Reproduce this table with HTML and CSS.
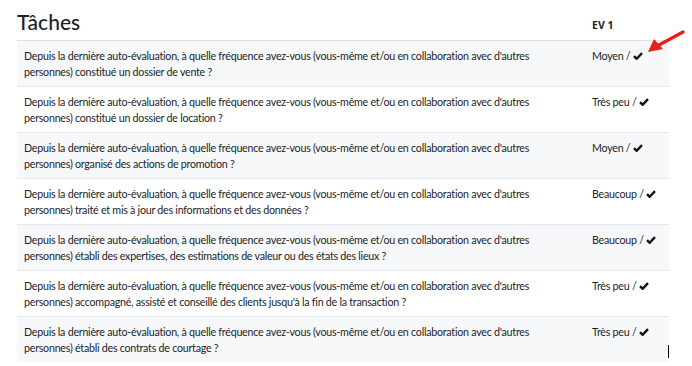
FILE: index.html
```html
<!DOCTYPE html>
<html lang="fr">
<head>
<meta charset="utf-8">
<title>Tâches</title>
<link rel="stylesheet" href="styles.css">
</head>
<body>
<div class="page">
  <table class="tasks">
    <colgroup>
      <col class="col-q">
      <col class="col-a">
    </colgroup>
    <thead>
      <tr>
        <th class="title">Tâches</th>
        <th class="ev">EV 1</th>
      </tr>
    </thead>
    <tbody>
      <tr>
        <td class="q">Depuis la dernière auto-évaluation, à quelle fréquence avez-vous (vous-même et/ou en collaboration avec d'autres personnes) constitué un dossier de vente ?</td>
        <td class="a">Moyen / <svg class="check" viewBox="0 0 10 8"><path d="M1 4.2 L3.6 6.8 L9 1.2"/></svg></td>
      </tr>
      <tr>
        <td class="q">Depuis la dernière auto-évaluation, à quelle fréquence avez-vous (vous-même et/ou en collaboration avec d'autres personnes) constitué un dossier de location ?</td>
        <td class="a">Très peu / <svg class="check" viewBox="0 0 10 8"><path d="M1 4.2 L3.6 6.8 L9 1.2"/></svg></td>
      </tr>
      <tr>
        <td class="q">Depuis la dernière auto-évaluation, à quelle fréquence avez-vous (vous-même et/ou en collaboration avec d'autres personnes) organisé des actions de promotion ?</td>
        <td class="a">Moyen / <svg class="check" viewBox="0 0 10 8"><path d="M1 4.2 L3.6 6.8 L9 1.2"/></svg></td>
      </tr>
      <tr>
        <td class="q">Depuis la dernière auto-évaluation, à quelle fréquence avez-vous (vous-même et/ou en collaboration avec d'autres personnes) traité et mis à jour des informations et des données ?</td>
        <td class="a">Beaucoup / <svg class="check" viewBox="0 0 10 8"><path d="M1 4.2 L3.6 6.8 L9 1.2"/></svg></td>
      </tr>
      <tr>
        <td class="q">Depuis la dernière auto-évaluation, à quelle fréquence avez-vous (vous-même et/ou en collaboration avec d'autres personnes) établi des expertises, des estimations de valeur ou des états des lieux ?</td>
        <td class="a">Beaucoup / <svg class="check" viewBox="0 0 10 8"><path d="M1 4.2 L3.6 6.8 L9 1.2"/></svg></td>
      </tr>
      <tr>
        <td class="q">Depuis la dernière auto-évaluation, à quelle fréquence avez-vous (vous-même et/ou en collaboration avec d'autres personnes) accompagné, assisté et conseillé des clients jusqu'à la fin de la transaction ?</td>
        <td class="a">Très peu / <svg class="check" viewBox="0 0 10 8"><path d="M1 4.2 L3.6 6.8 L9 1.2"/></svg></td>
      </tr>
      <tr>
        <td class="q">Depuis la dernière auto-évaluation, à quelle fréquence avez-vous (vous-même et/ou en collaboration avec d'autres personnes) établi des contrats de courtage ?</td>
        <td class="a">Très peu / <svg class="check" viewBox="0 0 10 8"><path d="M1 4.2 L3.6 6.8 L9 1.2"/></svg></td>
      </tr>
    </tbody>
  </table>
  <svg class="arrow" viewBox="0 0 40 24"><path d="M37 2 L13 15" stroke="#e8211c" stroke-width="3.2" stroke-linecap="round"/><path d="M2 22 L8 9 L17 19 Z" fill="#e8211c"/></svg>
  <span class="caret"></span>
</div>
</body>
</html>
```
FILE: styles.css
```css
html, body {
  margin: 0;
  padding: 0;
  background: #ffffff;
}
body {
  font-family: "Lato", "Noto Sans", "DejaVu Sans", sans-serif;
  color: #212529;
}
.page {
  position: relative;
  width: 692px;
  height: 366px;
  padding: 0 23px 0 17px;
  box-sizing: border-box;
}
.tasks {
  width: 652px;
  border-collapse: collapse;
  table-layout: fixed;
}
.col-q {
  width: 568px;
}
.col-a {
  width: 84px;
}
.tasks th {
  text-align: left;
  vertical-align: bottom;
  border-bottom: 1px solid #dee2e6;
}
.tasks th.title {
  font-size: 21px;
  font-weight: 500;
  height: 34px;
  padding: 0 0 6px 0;
  line-height: 24px;
  color: #1e2226;
}
.tasks th.ev {
  font-family: "Noto Sans", "DejaVu Sans", sans-serif;
  font-size: 10.5px;
  font-weight: 700;
  padding: 0 0 8px 7px;
}
.tasks td {
  font-size: 10.7px;
  letter-spacing: -0.25px;
  line-height: 16px;
  vertical-align: top;
  border-top: 1px solid #e6e8eb;
  padding: 7px 7px 6px 7px;
  color: #212529;
}
.tasks td.q {
  padding-right: 30px;
}
.tasks tbody tr:nth-child(odd) td {
  background: #f7f8fa;
}
.tasks td.a {
  white-space: nowrap;
}
.check {
  width: 10px;
  height: 8px;
  vertical-align: 0;
}
.check path {
  fill: none;
  stroke: #111;
  stroke-width: 2.4;
}
.arrow {
  position: absolute;
  left: 646px;
  top: 30px;
  width: 40px;
  height: 24px;
}
.caret {
  position: absolute;
  left: 668px;
  top: 345px;
  width: 1px;
  height: 13px;
  background: #000;
}
```
